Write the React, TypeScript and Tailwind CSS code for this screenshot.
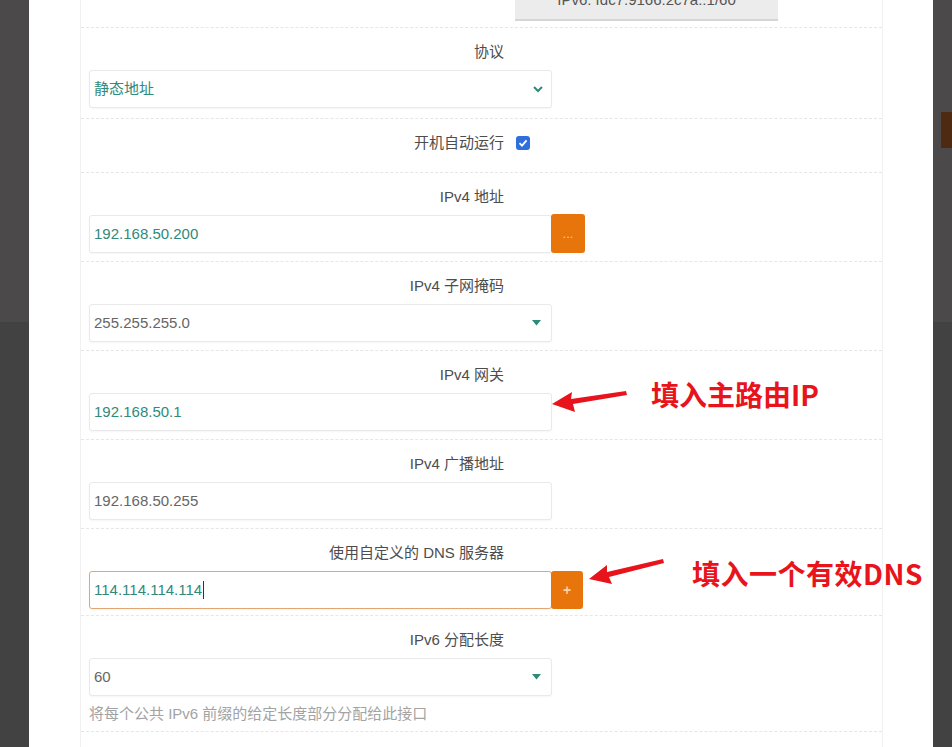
import React from "react";

const Label = ({ children }: { children: React.ReactNode }) => (
  <div className="w-[415px] text-right text-[15px] leading-[20px] text-[#4d4d4d]">{children}</div>
);

const Section = ({ children, pb }: { children: React.ReactNode; pb?: string }) => (
  <div className={"border-t border-dashed border-[#e6e6e6] pl-[8px] pt-[14px] " + (pb ?? "pb-[8px]")}>
    {children}
  </div>
);

const Box = ({ children, focused }: { children: React.ReactNode; focused?: boolean }) => (
  <div
    className={
      "mt-[8px] flex h-[38px] w-[463px] items-center justify-between rounded-[3px] border bg-white pl-[4px] pr-[8px] shadow-[0_1px_2px_rgba(0,0,0,0.04)] " +
      (focused ? "border-[#e2a673]" : "border-[#e9e9e9]")
    }
  >
    {children}
  </div>
);

const Triangle = () => (
  <svg width="9" height="6" viewBox="0 0 9 6" className="mr-[2px]">
    <polygon points="0,0 9,0 4.5,5.5" fill="#2f8a7a" />
  </svg>
);

export default function App() {
  return (
    <div className="relative flex h-[747px] w-[952px] overflow-hidden font-['Liberation_Sans','Noto_Sans_CJK_SC',sans-serif]">
      <div className="flex w-[29px] flex-col">
        <div className="h-[322px] bg-[#4b4949]" />
        <div className="flex-1 bg-[#434242]" />
      </div>

      <div className="flex-1 bg-white pl-[51px] pr-[50px]">
        <div className="h-full border-x border-[#f1f1f1]">
          <div className="h-[27px] pl-[434px]">
            <div className="h-[21px] w-[263px] overflow-hidden border-b-2 border-[#d6d6d6] bg-[#ececec] text-center">
              <div className="-mt-[10px] text-[15px] leading-[20px] text-[#555]">IPv6: fdc7:9166:2c7a::1/60</div>
            </div>
          </div>

          <Section pb="pb-[10px]">
            <Label>协议</Label>
            <Box>
              <span className="text-[15px] text-[#2f8a7a]">静态地址</span>
              <svg width="10" height="7" viewBox="0 0 10 7">
                <polyline points="1,1 5,5 9,1" fill="none" stroke="#2f8a7a" strokeWidth="2" />
              </svg>
            </Box>
          </Section>

          <div className="flex h-[54px] items-center border-t border-dashed border-[#e6e6e6] pb-[6px] pl-[8px]">
            <Label>开机自动运行</Label>
            <div className="ml-[12px] flex h-[14px] w-[14px] items-center justify-center rounded-[3px] bg-[#2f6fdc]">
              <svg width="10" height="10" viewBox="0 0 10 10">
                <polyline points="1.5,5.2 4,7.6 8.6,2.4" fill="none" stroke="white" strokeWidth="1.8" />
              </svg>
            </div>
          </div>

          <Section>
            <Label>IPv4 地址</Label>
            <div className="flex items-end">
              <Box>
                <span className="text-[15px] text-[#2f8a7a]">192.168.50.200</span>
              </Box>
              <div className="-ml-[1px] flex h-[39px] w-[34px] items-center justify-center rounded-[3px] bg-[#e8740c] text-[13px] leading-none text-[#f6c89a]">
                ...
              </div>
            </div>
          </Section>

          <Section>
            <Label>IPv4 子网掩码</Label>
            <Box>
              <span className="text-[15px] text-[#666]">255.255.255.0</span>
              <Triangle />
            </Box>
          </Section>

          <Section>
            <Label>IPv4 网关</Label>
            <Box>
              <span className="text-[15px] text-[#2f8a7a]">192.168.50.1</span>
            </Box>
          </Section>

          <Section>
            <Label>IPv4 广播地址</Label>
            <Box>
              <span className="text-[15px] text-[#666]">192.168.50.255</span>
            </Box>
          </Section>

          <Section pb="pb-[6px]">
            <Label>使用自定义的 DNS 服务器</Label>
            <div className="flex items-end">
              <Box focused>
                <span className="flex items-center text-[15px] text-[#2f8a7a]">
                  114.114.114.114
                  <span className="ml-[1px] inline-block h-[18px] w-[1px] bg-[#333]" />
                </span>
              </Box>
              <div className="-ml-[1px] flex h-[38px] w-[32px] items-center justify-center rounded-[3px] bg-[#e8740c] text-[14px] font-bold leading-none text-[#f6d2ad]">
                +
              </div>
            </div>
          </Section>

          <Section pb="pb-[6px]">
            <Label>IPv6 分配长度</Label>
            <Box>
              <span className="text-[15px] text-[#666]">60</span>
              <Triangle />
            </Box>
            <div className="mt-[7px] text-[15px] leading-[22px] text-[#a3a3a3]">
              将每个公共 IPv6 前缀的给定长度部分分配给此接口
            </div>
          </Section>
          <div className="border-t border-dashed border-[#e6e6e6]" />
        </div>
      </div>

      <div className="flex w-[19px] flex-col">
        <div className="flex h-[322px] flex-col bg-[#4b4949] pt-[112px]">
          <div className="ml-[8px] h-[36px] bg-[#4f2a12]" />
        </div>
        <div className="flex-1 bg-[#434242]" />
      </div>

      <svg className="pointer-events-none absolute left-0 top-0" width="952" height="747">
        <polygon points="552,404 572,392 571,399 626,391 627,395 573,404 575,412" fill="#e8141c" />
        <polygon points="589,579 607,565 607,572 663,559 664,563 609,577 612,584" fill="#e8141c" />
      </svg>

      <div className="absolute left-[651px] top-[379px] font-['Noto_Sans_CJK_SC',sans-serif] text-[28px] font-bold leading-[30px] text-[#e8141c]">
        填入主路由IP
      </div>
      <div className="absolute left-[692px] top-[558px] font-['Noto_Sans_CJK_SC',sans-serif] text-[28px] font-bold leading-[30px] tracking-[0.5px] text-[#e8141c]">
        填入一个有效DNS
      </div>
    </div>
  );
}
